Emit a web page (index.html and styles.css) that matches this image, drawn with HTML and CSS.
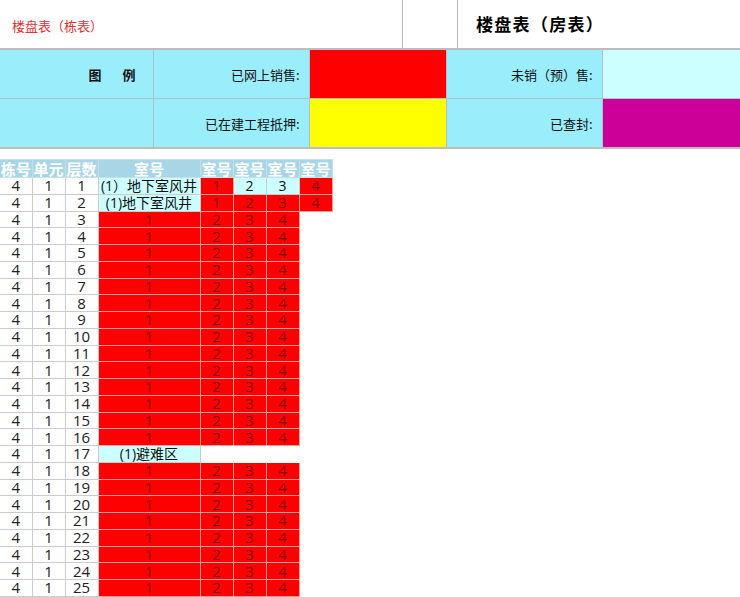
FILE: index.html
```html
<!DOCTYPE html>
<html lang="zh">
<head>
<meta charset="utf-8">
<link rel="stylesheet" href="styles.css">
</head>
<body>
<div class="top">
  <div class="t-left">楼盘表（栋表）</div>
  <div class="t-mid"></div>
  <div class="t-right">楼盘表（房表）</div>
</div>
<table class="legend">
  <colgroup>
    <col class="l1"><col class="l2"><col class="l3"><col class="l4"><col class="l5">
  </colgroup>
  <tr>
    <td class="lg-lab c1"><span class="tu">图</span>例</td>
    <td class="lg-lab">已网上销售:</td>
    <td class="sw red"></td>
    <td class="lg-lab">未销（预）售:</td>
    <td class="sw lcyan"></td>
  </tr>
  <tr>
    <td class="lg-lab"></td>
    <td class="lg-lab">已在建工程抵押:</td>
    <td class="sw yellow"></td>
    <td class="lg-lab">已查封:</td>
    <td class="sw magenta"></td>
  </tr>
</table>
<table class="grid">
  <colgroup>
    <col class="w32"><col class="w33"><col class="w33"><col class="w102"><col class="w33"><col class="w33"><col class="w33"><col class="w33">
  </colgroup>
  <tr class="hd">
    <th>栋号</th><th>单元</th><th>层数</th><th>室号</th><th>室号</th><th>室号</th><th>室号</th><th>室号</th>
  </tr>
  <tr><td>4</td><td>1</td><td>1</td><td class="cy">(1）地下室风井</td><td class="rd">1</td><td class="cy">2</td><td class="cy">3</td><td class="rd">4</td></tr>
  <tr><td>4</td><td>1</td><td>2</td><td class="cy">(1)地下室风井</td><td class="rd">1</td><td class="rd">2</td><td class="rd">3</td><td class="rd">4</td></tr>
  <tr><td>4</td><td>1</td><td>3</td><td class="rd">1</td><td class="rd">2</td><td class="rd">3</td><td class="rd">4</td><td class="em"></td></tr>
  <tr><td>4</td><td>1</td><td>4</td><td class="rd">1</td><td class="rd">2</td><td class="rd">3</td><td class="rd">4</td><td class="em"></td></tr>
  <tr><td>4</td><td>1</td><td>5</td><td class="rd">1</td><td class="rd">2</td><td class="rd">3</td><td class="rd">4</td><td class="em"></td></tr>
  <tr><td>4</td><td>1</td><td>6</td><td class="rd">1</td><td class="rd">2</td><td class="rd">3</td><td class="rd">4</td><td class="em"></td></tr>
  <tr><td>4</td><td>1</td><td>7</td><td class="rd">1</td><td class="rd">2</td><td class="rd">3</td><td class="rd">4</td><td class="em"></td></tr>
  <tr><td>4</td><td>1</td><td>8</td><td class="rd">1</td><td class="rd">2</td><td class="rd">3</td><td class="rd">4</td><td class="em"></td></tr>
  <tr><td>4</td><td>1</td><td>9</td><td class="rd">1</td><td class="rd">2</td><td class="rd">3</td><td class="rd">4</td><td class="em"></td></tr>
  <tr><td>4</td><td>1</td><td>10</td><td class="rd">1</td><td class="rd">2</td><td class="rd">3</td><td class="rd">4</td><td class="em"></td></tr>
  <tr><td>4</td><td>1</td><td>11</td><td class="rd">1</td><td class="rd">2</td><td class="rd">3</td><td class="rd">4</td><td class="em"></td></tr>
  <tr><td>4</td><td>1</td><td>12</td><td class="rd">1</td><td class="rd">2</td><td class="rd">3</td><td class="rd">4</td><td class="em"></td></tr>
  <tr><td>4</td><td>1</td><td>13</td><td class="rd">1</td><td class="rd">2</td><td class="rd">3</td><td class="rd">4</td><td class="em"></td></tr>
  <tr><td>4</td><td>1</td><td>14</td><td class="rd">1</td><td class="rd">2</td><td class="rd">3</td><td class="rd">4</td><td class="em"></td></tr>
  <tr><td>4</td><td>1</td><td>15</td><td class="rd">1</td><td class="rd">2</td><td class="rd">3</td><td class="rd">4</td><td class="em"></td></tr>
  <tr><td>4</td><td>1</td><td>16</td><td class="rd">1</td><td class="rd">2</td><td class="rd">3</td><td class="rd">4</td><td class="em"></td></tr>
  <tr><td>4</td><td>1</td><td>17</td><td class="cy">(1)避难区</td><td class="em"></td><td class="em"></td><td class="em"></td><td class="em"></td></tr>
  <tr><td>4</td><td>1</td><td>18</td><td class="rd">1</td><td class="rd">2</td><td class="rd">3</td><td class="rd">4</td><td class="em"></td></tr>
  <tr><td>4</td><td>1</td><td>19</td><td class="rd">1</td><td class="rd">2</td><td class="rd">3</td><td class="rd">4</td><td class="em"></td></tr>
  <tr><td>4</td><td>1</td><td>20</td><td class="rd">1</td><td class="rd">2</td><td class="rd">3</td><td class="rd">4</td><td class="em"></td></tr>
  <tr><td>4</td><td>1</td><td>21</td><td class="rd">1</td><td class="rd">2</td><td class="rd">3</td><td class="rd">4</td><td class="em"></td></tr>
  <tr><td>4</td><td>1</td><td>22</td><td class="rd">1</td><td class="rd">2</td><td class="rd">3</td><td class="rd">4</td><td class="em"></td></tr>
  <tr><td>4</td><td>1</td><td>23</td><td class="rd">1</td><td class="rd">2</td><td class="rd">3</td><td class="rd">4</td><td class="em"></td></tr>
  <tr><td>4</td><td>1</td><td>24</td><td class="rd">1</td><td class="rd">2</td><td class="rd">3</td><td class="rd">4</td><td class="em"></td></tr>
  <tr><td>4</td><td>1</td><td>25</td><td class="rd">1</td><td class="rd">2</td><td class="rd">3</td><td class="rd">4</td><td class="em"></td></tr>
  <tr><td>4</td><td>1</td><td>26</td><td class="rd">1</td><td class="rd">2</td><td class="rd">3</td><td class="rd">4</td><td class="em"></td></tr>
</table>
</body>
</html>
```
FILE: styles.css
```css
html, body {
  margin: 0;
  padding: 0;
  background: #fff;
  overflow: hidden;
}
body {
  font-family: "Noto Sans CJK SC", "Noto Sans", sans-serif;
  color: #000;
  width: 740px;
  height: 597px;
}
.top {
  display: flex;
  height: 48px;
}
.t-left {
  width: 403px;
  box-sizing: border-box;
  border-right: 1px solid #bbbbbb;
  color: #e8302f;
  font-size: 13px;
  line-height: 48px;
  padding-left: 12px;
  padding-top: 2px;
}
.t-mid {
  width: 55px;
  box-sizing: border-box;
  border-right: 1px solid #bbbbbb;
}
.t-right {
  flex: 1;
  font-size: 17px;
  letter-spacing: 1.3px;
  font-weight: bold;
  line-height: 48px;
  padding-left: 18px;
}
.legend {
  border-collapse: collapse;
  width: 740px;
  table-layout: fixed;
  border-top: 2px solid #bdbdbd;
  border-bottom: 2px solid #bdbdbd;
}
.l1 { width: 153px; }
.l2 { width: 156px; }
.l3 { width: 137px; }
.l4 { width: 156px; }
.l5 { width: 138px; }
.legend td {
  height: 48px;
  padding: 0;
  border: 1px solid #aebfcf;
  background: #9aeefc;
  font-size: 13px;
  color: #111;
}
.legend tr td:first-child { border-left: none; }
.legend tr td:last-child { border-right: none; }
.legend .lg-lab {
  text-align: right;
  padding-right: 9px;
}
.legend .c1 {
  font-weight: bold;
  padding-right: 17px;
}
.tu { margin-right: 21px; }
.legend .sw.red { background: #ff0000; }
.legend .sw.yellow { background: #ffff00; }
.legend .sw.lcyan { background: #ccffff; }
.legend .sw.magenta { background: #cc0099; }

.grid {
  margin-top: 10px;
  border-collapse: collapse;
  table-layout: fixed;
  width: 332px;
}
.w32 { width: 32px; }
.w33 { width: 33px; }
.w102 { width: 102px; }
.grid th {
  height: 17px;
  padding: 0;
  background: #a9d6e6;
  color: #fff;
  font-size: 15px;
  font-weight: bold;
  line-height: 17px;
  border: 1px solid #c6dfe8;
  white-space: nowrap;
  overflow: hidden;
  text-align: center;
}
.grid th:first-child { border-left: none; }
.grid td {
  height: 15.75px;
  padding: 0;
  font-family: "Open Sans", "Noto Sans CJK SC", sans-serif;
  font-size: 15px;
  line-height: 15px;
  text-align: center;
  border: 1px solid #cccccc;
  white-space: nowrap;
  background: #fff;
  color: #222;
}
.grid tr td:first-child { border-left: none; }
.grid td.rd {
  background: #ff0000;
  color: #800000;
  border-color: #ff9b9b;
}
.grid td.cy {
  background: #ccffff;
  color: #111;
  font-size: 14px;
}
.grid td.em {
  border-color: #fff;
  background: #fff;
}
```
